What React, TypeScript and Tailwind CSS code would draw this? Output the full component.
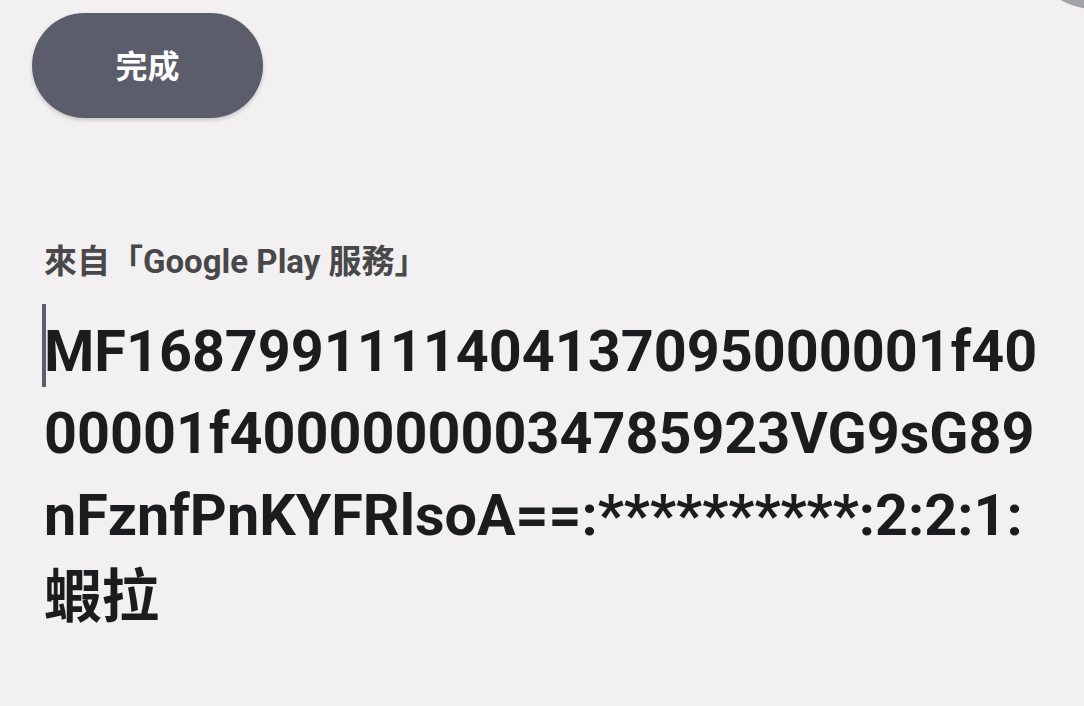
import React from "react";

const line2 = "00001f4" + "0".repeat(8) + "34785923VG9sG89";
const line3 = "nFznfPnKYFRlsoA==:" + "*".repeat(10) + ":2:2:1:";

export default function App() {
  const font = { fontFamily: 'Roboto, "Noto Sans CJK TC", sans-serif' };
  return (
    <div
      className="relative w-[1084px] h-[706px] overflow-hidden bg-[#f2f0f1]"
      style={font}
    >
      <div className="absolute left-[1026px] top-[-128px] w-[137px] h-[137px] rounded-full bg-[#a3a2a4]" />
      <div className="pt-[13px] pl-[32px]">
        <button className="w-[231px] h-[105px] rounded-full bg-[#5b5e6a] shadow-[0_2px_4px_rgba(0,0,0,0.18)] flex items-center justify-center pt-[3px] text-white text-[32px] font-bold">
          完成
        </button>
      </div>
      <div className="mt-[126px] pl-[44px] text-[33px] leading-[36px] font-bold text-[#48484a]">
        來自「Google Play 服務」
      </div>
      <div className="relative mt-[31px] pl-[44px] text-[57.5px] leading-[82px] font-bold text-[#1c1c1e]">
        <div className="absolute left-[42px] top-[-7px] w-[4px] h-[83px] bg-[#5b5e6a]" />
        <div>MF1687991111404137095000001f40</div>
        <div>{line2}</div>
        <div>{line3}</div>
        <div>蝦拉</div>
      </div>
    </div>
  );
}
